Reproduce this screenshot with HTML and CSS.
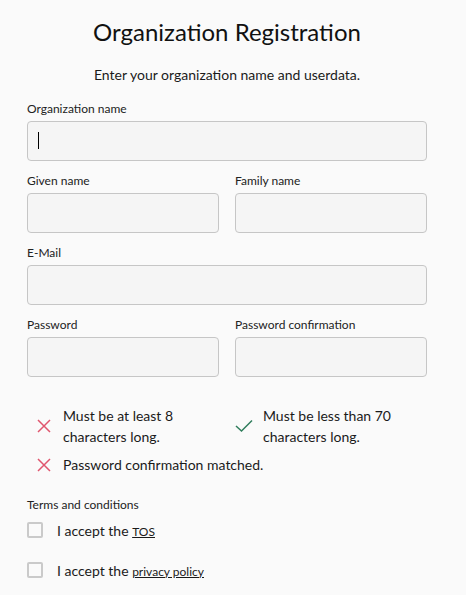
FILE: index.html
```html
<!DOCTYPE html>
<html lang="en">
<head>
<meta charset="utf-8">
<title>Organization Registration</title>
<link rel="stylesheet" href="styles.css">
</head>
<body>
<main class="page">
  <h1 class="title">Organization Registration</h1>
  <p class="subtitle">Enter your organization name and userdata.</p>

  <div class="field">
    <label class="label" for="org">Organization name</label>
    <div class="input-wrap">
      <input class="input" id="org" type="text">
      <span class="caret"></span>
    </div>
  </div>

  <div class="row">
    <div class="field">
      <label class="label" for="given">Given name</label>
      <input class="input" id="given" type="text">
    </div>
    <div class="field">
      <label class="label" for="family">Family name</label>
      <input class="input" id="family" type="text">
    </div>
  </div>

  <div class="field">
    <label class="label" for="mail">E-Mail</label>
    <input class="input" id="mail" type="email">
  </div>

  <div class="row">
    <div class="field">
      <label class="label" for="pw">Password</label>
      <input class="input" id="pw" type="password">
    </div>
    <div class="field">
      <label class="label" for="pw2">Password confirmation</label>
      <input class="input" id="pw2" type="password">
    </div>
  </div>

  <ul class="checks">
    <li class="check">
      <svg class="icon" viewBox="0 0 14 14" width="14" height="14"><path d="M1 1 L13 13 M13 1 L1 13" stroke="#e0566e" stroke-width="1.5" fill="none"/></svg>
      <span class="check-text">Must be at least 8 characters long.</span>
    </li>
    <li class="check">
      <svg class="icon" viewBox="0 0 18 14" width="18" height="14"><path d="M1 7 L6.5 12 L17 1.5" stroke="#2f7d5c" stroke-width="1.5" fill="none"/></svg>
      <span class="check-text">Must be less than 70 characters long.</span>
    </li>
    <li class="check wide">
      <svg class="icon" viewBox="0 0 14 14" width="14" height="14"><path d="M1 1 L13 13 M13 1 L1 13" stroke="#e0566e" stroke-width="1.5" fill="none"/></svg>
      <span class="check-text">Password confirmation matched.</span>
    </li>
  </ul>

  <div class="terms">
    <div class="label">Terms and conditions</div>
    <label class="accept">
      <input class="box" type="checkbox">
      <span>I accept the <a class="link" href="#">TOS</a></span>
    </label>
    <label class="accept">
      <input class="box" type="checkbox">
      <span>I accept the <a class="link" href="#">privacy policy</a></span>
    </label>
  </div>
</main>
</body>
</html>
```
FILE: styles.css
```css
* { box-sizing: border-box; }

html, body {
  margin: 0;
  padding: 0;
  background: #fafafa;
}

body {
  font-family: Lato, "Noto Sans", sans-serif;
  color: #1a1a1a;
}

.page {
  width: 466px;
  padding: 17px 39px 0 27px;
}

.title {
  margin: 0;
  font-size: 24px;
  font-weight: 400;
  line-height: 30px;
  text-align: center;
  color: #111;
}

.subtitle {
  margin: 18px 0 15px;
  font-size: 14px;
  line-height: 20px;
  text-align: center;
}

.field {
  display: flex;
  flex-direction: column;
  margin-bottom: 11px;
}

.label {
  font-size: 12px;
  line-height: 16px;
  padding-top: 1px;
  margin-bottom: 4px;
  color: #222;
}

.input-wrap {
  position: relative;
}

.input {
  display: block;
  width: 100%;
  height: 40px;
  margin: 0;
  border: 1px solid #c6c6c6;
  border-radius: 4px;
  background: #f5f5f5;
  font-family: inherit;
  font-size: 14px;
  padding: 0 11px;
  outline: none;
}

.caret {
  position: absolute;
  left: 11px;
  top: 11px;
  width: 1px;
  height: 17px;
  background: #000;
}

.row {
  display: grid;
  grid-template-columns: 192px 192px;
  column-gap: 16px;
}

.checks {
  list-style: none;
  margin: 17px 0 0;
  padding: 0 0 0 8px;
  display: grid;
  grid-template-columns: 200px 200px;
  row-gap: 7px;
}

.check {
  display: flex;
  align-items: center;
  gap: 10px;
  font-size: 14px;
  line-height: 21px;
}

.check.wide {
  grid-column: 1 / span 2;
}

.icon {
  flex: 0 0 18px;
  width: 18px;
  display: block;
}

.check:nth-child(1) .icon,
.check:nth-child(3) .icon {
  width: 14px;
  flex: 0 0 14px;
  margin: 0 2px 0 2px;
}

.check-text {
  width: 130px;
}

.wide .check-text {
  width: auto;
}

.terms {
  margin-top: 21px;
}

.terms .label {
  margin-bottom: 5px;
}

.accept {
  display: flex;
  align-items: center;
  gap: 14px;
  height: 24px;
  margin-bottom: 16px;
  font-size: 14px;
  color: #1a1a1a;
}

.box {
  appearance: none;
  -webkit-appearance: none;
  width: 16px;
  height: 16px;
  margin: 0;
  border: 2px solid #cacaca;
  border-radius: 2px;
  background: #fafafa;
}

.link {
  color: #1a1a1a;
  font-size: 12px;
  text-decoration: underline;
}
```
